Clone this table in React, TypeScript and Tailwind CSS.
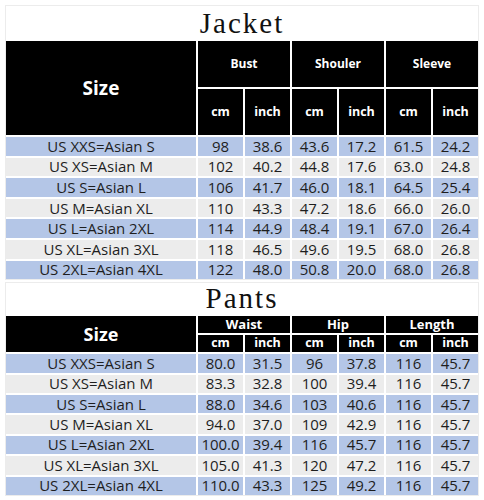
const jacketRows: string[][] = [
  ["US XXS=Asian S", "98", "38.6", "43.6", "17.2", "61.5", "24.2"],
  ["US XS=Asian M", "102", "40.2", "44.8", "17.6", "63.0", "24.8"],
  ["US S=Asian L", "106", "41.7", "46.0", "18.1", "64.5", "25.4"],
  ["US M=Asian XL", "110", "43.3", "47.2", "18.6", "66.0", "26.0"],
  ["US L=Asian 2XL", "114", "44.9", "48.4", "19.1", "67.0", "26.4"],
  ["US XL=Asian 3XL", "118", "46.5", "49.6", "19.5", "68.0", "26.8"],
  ["US 2XL=Asian 4XL", "122", "48.0", "50.8", "20.0", "68.0", "26.8"],
];

const pantsRows: string[][] = [
  ["US XXS=Asian S", "80.0", "31.5", "96", "37.8", "116", "45.7"],
  ["US XS=Asian M", "83.3", "32.8", "100", "39.4", "116", "45.7"],
  ["US S=Asian L", "88.0", "34.6", "103", "40.6", "116", "45.7"],
  ["US M=Asian XL", "94.0", "37.0", "109", "42.9", "116", "45.7"],
  ["US L=Asian 2XL", "100.0", "39.4", "116", "45.7", "116", "45.7"],
  ["US XL=Asian 3XL", "105.0", "41.3", "120", "47.2", "116", "45.7"],
  ["US 2XL=Asian 4XL", "110.0", "43.3", "125", "49.2", "116", "45.7"],
];

function Body({ rows }: { rows: string[][] }) {
  return (
    <>
      {rows.map((row, i) =>
        row.map((cell, j) => (
          <div
            key={`${i}-${j}`}
            className={`flex items-center justify-center text-[15px] leading-none text-[#1e1e1e] ${
              i % 2 === 0 ? "bg-[#b4c6e7]" : "bg-[#ececec]"
            }`}
          >
            {cell}
          </div>
        ))
      )}
    </>
  );
}

function Head({ children, className = "" }: { children: React.ReactNode; className?: string }) {
  return (
    <div className={`flex items-center justify-center bg-black font-bold text-white ${className}`}>
      {children}
    </div>
  );
}

function Section({
  title,
  groups,
  rows,
  template,
  titleH,
  big,
}: {
  title: string;
  groups: string[];
  rows: string[][];
  template: string;
  titleH: string;
  big: boolean;
}) {
  return (
    <div className="mx-[5px] border border-[#ececec] bg-white">
      <div
        className={`flex items-end justify-center pb-[3px] ${titleH} text-[29px] leading-none tracking-[2px] text-[#111]`}
        style={{ fontFamily: '"Liberation Serif", "DejaVu Serif", serif' }}
      >
        {title}
      </div>
      <div className={`grid grid-cols-[190px_repeat(6,1fr)] gap-[2px] bg-white ${template}`}>
        <Head className={`row-span-2 ${big ? "text-[19px]" : "text-[18px]"}`}>Size</Head>
        {groups.map((g) => (
          <Head key={g} className={`col-span-2 ${big ? "text-[12px]" : "text-[13px]"}`}>
            {g}
          </Head>
        ))}
        {groups.map((g) => (
          <>
            <Head key={g + "cm"} className="text-[12.5px]">cm</Head>
            <Head key={g + "in"} className="text-[12.5px]">inch</Head>
          </>
        ))}
        <Body rows={rows} />
      </div>
    </div>
  );
}

export default function App() {
  return (
    <div
      className="h-[500px] w-[484px] bg-white pt-[5px]"
      style={{ fontFamily: '"Open Sans", "Noto Sans", sans-serif' }}
    >
      <Section
        title="Jacket"
        groups={["Bust", "Shouler", "Sleeve"]}
        rows={jacketRows}
        template="grid-rows-[46px_46px_repeat(7,18.6px)]"
        titleH="h-[35px]"
        big
      />
      <div className="h-[2px]" />
      <Section
        title="Pants"
        groups={["Waist", "Hip", "Length"]}
        rows={pantsRows}
        template="grid-rows-[17px_17px_repeat(7,18.4px)]"
        titleH="h-[33px]"
        big={false}
      />
    </div>
  );
}
